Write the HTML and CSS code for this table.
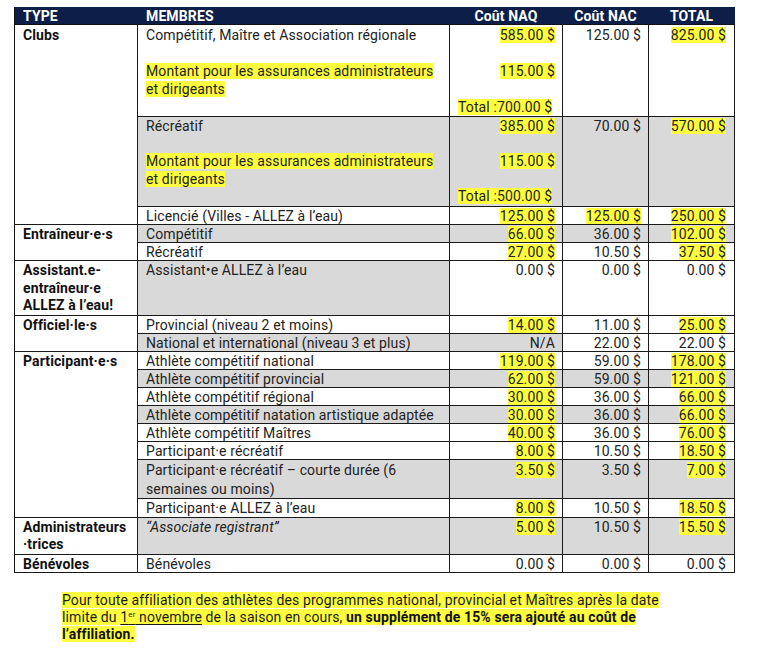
FILE: index.html
```html
<!DOCTYPE html>
<html lang="fr">
<head>
<meta charset="utf-8">
<title>Coûts d'affiliation</title>
<link rel="stylesheet" href="styles.css">
</head>
<body>
<div class="page">
<table class="fees">
<colgroup><col class="c-type"><col class="c-mem"><col class="c-naq"><col class="c-nac"><col class="c-tot"></colgroup>
<thead>
<tr><th class="l">TYPE</th><th class="l">MEMBRES</th><th>Coût NAQ</th><th>Coût NAC</th><th class="tot">TOTAL</th></tr>
</thead>
<tbody>
<tr class="tall">
  <td class="type" rowspan="3">Clubs</td>
  <td><div>Compétitif, Maître et Association régionale</div><div>&nbsp;</div><div><mark>Montant pour les assurances administrateurs</mark></div><div><mark>et dirigeants</mark></div></td>
  <td class="num"><div><mark>585.00 $</mark></div><div>&nbsp;</div><div><mark>115.00 $</mark></div><div>&nbsp;</div><div class="sub"><mark>Total :700.00 $</mark></div></td>
  <td class="num">125.00 $</td>
  <td class="num tot"><mark>825.00 $</mark></td>
</tr>
<tr class="tall tall2 g">
  <td><div>Récréatif</div><div>&nbsp;</div><div><mark>Montant pour les assurances administrateurs</mark></div><div><mark>et dirigeants</mark></div></td>
  <td class="num"><div><mark>385.00 $</mark></div><div>&nbsp;</div><div><mark>115.00 $</mark></div><div>&nbsp;</div><div class="sub"><mark>Total :500.00 $</mark></div></td>
  <td class="num">70.00 $</td>
  <td class="num tot"><mark>570.00 $</mark></td>
</tr>
<tr>
  <td>Licencié (Villes - ALLEZ à l’eau)</td>
  <td class="num"><mark>125.00 $</mark></td>
  <td class="num"><mark>125.00 $</mark></td>
  <td class="num tot"><mark>250.00 $</mark></td>
</tr>
<tr class="g">
  <td class="type" rowspan="2">Entraîneur·e·s</td>
  <td>Compétitif</td>
  <td class="num"><mark>66.00 $</mark></td>
  <td class="num">36.00 $</td>
  <td class="num tot"><mark>102.00 $</mark></td>
</tr>
<tr>
  <td>Récréatif</td>
  <td class="num"><mark>27.00 $</mark></td>
  <td class="num">10.50 $</td>
  <td class="num tot"><mark>37.50 $</mark></td>
</tr>
<tr class="three">
  <td class="type">Assistant.e-<br>entraîneur·e<br>ALLEZ à l’eau!</td>
  <td class="gc">Assistant•e ALLEZ à l’eau</td>
  <td class="num">0.00 $</td>
  <td class="num">0.00 $</td>
  <td class="num tot">0.00 $</td>
</tr>
<tr>
  <td class="type" rowspan="2">Officiel·le·s</td>
  <td>Provincial (niveau 2 et moins)</td>
  <td class="num"><mark>14.00 $</mark></td>
  <td class="num">11.00 $</td>
  <td class="num tot"><mark>25.00 $</mark></td>
</tr>
<tr>
  <td class="gc">National et international (niveau 3 et plus)</td>
  <td class="num gc">N/A</td>
  <td class="num">22.00 $</td>
  <td class="num tot">22.00 $</td>
</tr>
<tr>
  <td class="type" rowspan="8">Participant·e·s</td>
  <td>Athlète compétitif national</td>
  <td class="num"><mark>119.00 $</mark></td>
  <td class="num">59.00 $</td>
  <td class="num tot"><mark>178.00 $</mark></td>
</tr>
<tr class="g">
  <td>Athlète compétitif provincial</td>
  <td class="num"><mark>62.00 $</mark></td>
  <td class="num">59.00 $</td>
  <td class="num tot"><mark>121.00 $</mark></td>
</tr>
<tr>
  <td>Athlète compétitif régional</td>
  <td class="num"><mark>30.00 $</mark></td>
  <td class="num">36.00 $</td>
  <td class="num tot"><mark>66.00 $</mark></td>
</tr>
<tr class="g">
  <td>Athlète compétitif natation artistique adaptée</td>
  <td class="num"><mark>30.00 $</mark></td>
  <td class="num">36.00 $</td>
  <td class="num tot"><mark>66.00 $</mark></td>
</tr>
<tr>
  <td>Athlète compétitif Maîtres</td>
  <td class="num"><mark>40.00 $</mark></td>
  <td class="num">36.00 $</td>
  <td class="num tot"><mark>76.00 $</mark></td>
</tr>
<tr>
  <td>Participant·e récréatif</td>
  <td class="num"><mark>8.00 $</mark></td>
  <td class="num">10.50 $</td>
  <td class="num tot"><mark>18.50 $</mark></td>
</tr>
<tr class="g two">
  <td>Participant·e récréatif – courte durée (6<br>semaines ou moins)</td>
  <td class="num"><mark>3.50 $</mark></td>
  <td class="num">3.50 $</td>
  <td class="num tot"><mark>7.00 $</mark></td>
</tr>
<tr class="one19">
  <td>Participant·e ALLEZ à l’eau</td>
  <td class="num"><mark>8.00 $</mark></td>
  <td class="num">10.50 $</td>
  <td class="num tot"><mark>18.50 $</mark></td>
</tr>
<tr class="g admin">
  <td class="type">Administrateurs<br>·trices</td>
  <td><em>“Associate registrant”</em></td>
  <td class="num"><mark>5.00 $</mark></td>
  <td class="num">10.50 $</td>
  <td class="num tot"><mark>15.50 $</mark></td>
</tr>
<tr>
  <td class="type">Bénévoles</td>
  <td>Bénévoles</td>
  <td class="num">0.00 $</td>
  <td class="num">0.00 $</td>
  <td class="num tot">0.00 $</td>
</tr>
</tbody>
</table>

<p class="note"><mark>Pour toute affiliation des athlètes des programmes national, provincial et Maîtres après la date</mark><br><mark>limite du <u>1<sup>er</sup> novembre</u> de la saison en cours, <b>un supplément de 15% sera ajouté au coût de</b></mark><br><mark><b>l’affiliation.</b></mark></p>
</div>
</body>
</html>
```

FILE: styles.css
```css
* { box-sizing: border-box; }
html, body { margin: 0; padding: 0; background: #ffffff; }
body {
  font-family: "Roboto", "Liberation Sans", sans-serif;
  font-size: 14px;
  letter-spacing: 0.12px;
  color: #222222;
}
.page { padding: 7px 0 0 14px; }

.fees {
  border-collapse: collapse;
  table-layout: fixed;
  width: 720px;
}
.c-type { width: 123px; }
.c-mem { width: 312px; }
.c-naq { width: 113px; }
.c-nac { width: 86px; }
.c-tot { width: 86px; }

.fees th {
  background: #0d1f48;
  color: #ffffff;
  font-weight: 700;
  line-height: 16px;
  padding: 0 8px;
  text-align: center;
  border: 1px solid #0d1f48;
  border-left-color: #5a6070;
  border-bottom: 1px solid #111;
}
.fees th.l { text-align: left; }
.fees th:first-child { border-left-color: #111; }

.fees td {
  border: 1px solid #1a1a1a;
  border-left-color: #3a3a3a;
  padding: 1px 8px 0 8px;
  line-height: 16px;
  vertical-align: top;
  background: #ffffff;
  white-space: nowrap;
}
.fees td.tot { border-left-color: #6a6a6a; }
.fees td.type { font-weight: 700; color: #111; border-left-color: #111; }
.fees td.num { text-align: right; padding-right: 7px; }
.fees td.tot.num { padding-right: 8px; }
.fees td .sub { text-align: left; }

.fees tr.tall td { line-height: 18px; }
.fees tr.tall2 td { line-height: 17.6px; }
.fees tr.three td { line-height: 17.7px; }
.fees tr.two td { line-height: 18.5px; }
.fees tr.one19 td { line-height: 17px; }
.fees tr.admin td { line-height: 17.3px; }

.fees tr.g td:not(.type),
.fees td.gc { background: #d9d9d9; }

mark {
  background: #ffff3f;
  color: inherit;
}

.note {
  margin: 19px 0 0 48px;
  line-height: 17px;
  color: #1a1a1a;
}
.note b { font-weight: 700; color: #111; }
.note sup { font-size: 8px; vertical-align: 5px; line-height: 0; }
.note u { text-decoration-thickness: 1px; text-underline-offset: 2px; }
em { font-style: italic; }
```
